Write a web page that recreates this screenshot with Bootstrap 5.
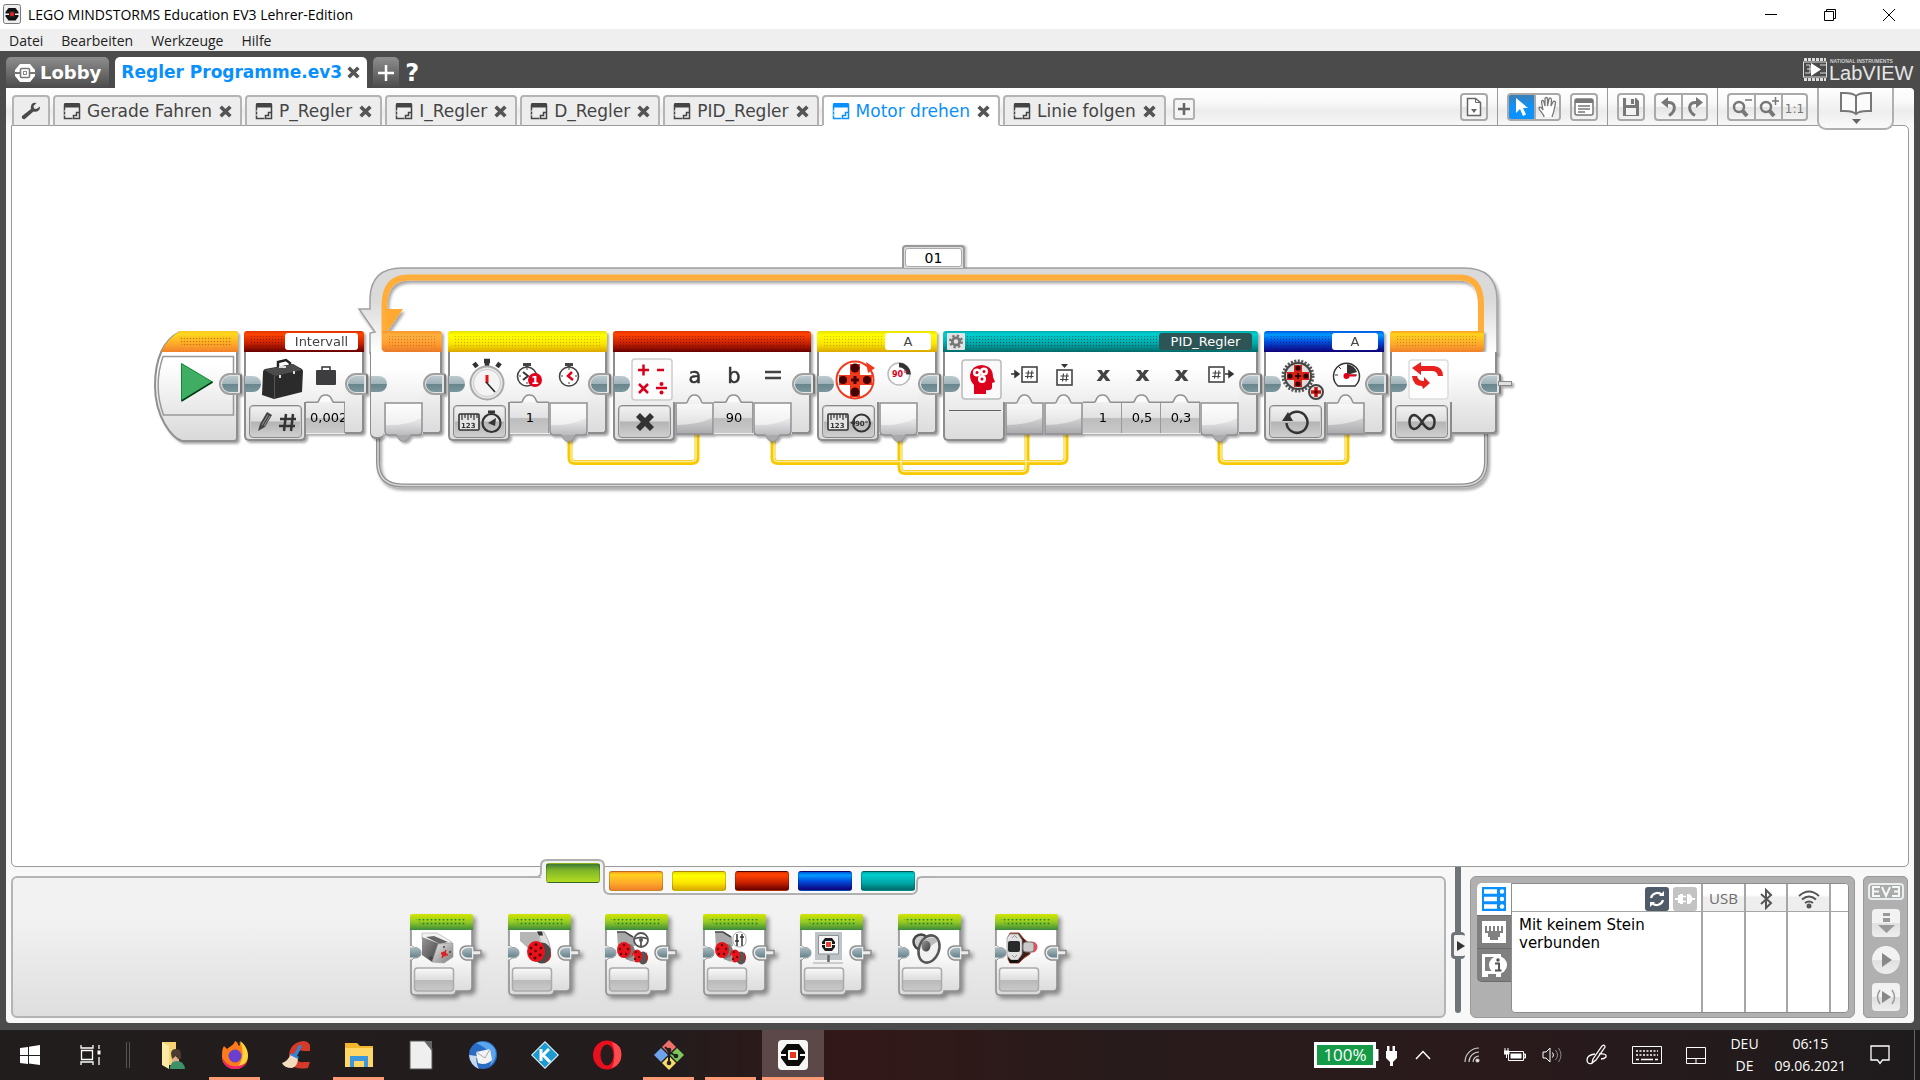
<!DOCTYPE html>
<html lang="de">
<head>
<meta charset="utf-8">
<meta name="viewport" content="width=device-width, initial-scale=1">
<title>LEGO MINDSTORMS Education EV3 Lehrer-Edition</title>
<link href="https://cdn.jsdelivr.net/npm/bootstrap@5.3.0/dist/css/bootstrap.min.css" rel="stylesheet">
<style>
:root{--ui:"DejaVu Sans",Verdana,sans-serif;--win:"Open Sans","Noto Sans",sans-serif;--line:#9a9a9a}
body{font-family:var(--ui);font-size:15px;line-height:18px;color:#333;background:#4b4b4b}
button{font-family:inherit;padding:0;border:0;background:none;color:inherit}
button svg,a svg{display:block}
.win-title{height:29px;background:#fff;color:#000;font:14px/29px var(--win)}
.win-ctl{margin-right:2px}
.win-ctl button{width:59px;height:29px;display:grid;place-items:center}
.win-menu{height:22px;background:#efefef;font:14px/24px var(--win);padding-left:9px;gap:18px}
.win-menu a{color:#222;text-decoration:none}
.proj-bar{height:37px;background:#4b4b4b;padding:6px 6px 0 6px;gap:6px}
.proj-tab{height:31px;border-radius:5px 5px 0 0;font:bold 18px/31px var(--ui);color:#fff;background:linear-gradient(#8e8e8e,#555 85%,#4b4b4b)}
.proj-tab.sel{background:#fff;color:#0a8fff;font-size:17px;padding:0 6px}
.frame-main{margin:0 6px;background:#f8f8f8;border-radius:0 4px 4px 4px}
.tab-row{height:38px;padding:0 6px;background:linear-gradient(#fff,#f8f8f8 40%,#ececec 60%,#f8f8f8);border-radius:0 5px 0 0}
.prog-tabs{gap:3px;padding-top:7px;z-index:2}
.prog-tab{height:31px;border:2px solid #b4b4b4;border-bottom:1px solid var(--line);border-radius:4px 4px 0 0;background:#ededed;font-size:17px;color:#444;padding:0 7px 0 8px;gap:6px}
.prog-tab.sel{background:#fff;border-bottom-color:#fff;color:#0a8fff}
.prog-tab.setup{padding:0 7px}
.tool-grp{height:38px;padding:5px 9px 0;gap:9px;border-left:1px solid var(--line)}
.tool-btn{width:28px;height:28px;display:grid;place-items:center;border:2px solid #a9a9a9;border-radius:4px;background:linear-gradient(#fff,#f6f6f6 50%,#e4e4e4 52%,#f4f4f4)}
.tool-join{display:flex}
.tool-join .tool-btn{width:27px}
.tool-join .tool-btn:not(:last-child){border-top-right-radius:0;border-bottom-right-radius:0;border-right-width:0}
.tool-join .tool-btn:not(:first-child){border-top-left-radius:0;border-bottom-left-radius:0}
.tool-btn.on{background:linear-gradient(#3b7fb4,#1191f5 45%,#0a92ff)}
.tool-btn.ratio{font-size:12px;color:#777}
.book-btn{width:77px;height:42px;margin-right:14px;border:2px solid #b0b0b0;border-top:0;border-radius:0 0 9px 9px;background:linear-gradient(#fff,#eee 60%,#fafafa);position:relative;z-index:3;display:grid;place-items:center}
.canvas{margin:-1px 5px 0;border:1px solid var(--line);border-radius:0 5px 5px 5px;background:#fff;padding:115px 0 0 142px;overflow:hidden}
.program{position:relative;width:1366px;height:260px;padding-top:90px}
.program>.wires{position:absolute;left:0;top:0}
.blk-row{display:flex;gap:6px;position:relative;align-items:flex-start}
.loop-name{position:absolute;left:748px;top:4px;width:63px;height:23px;border:2px solid #999;border-bottom:0;background:#ddd;border-radius:4px 4px 0 0;box-shadow:2px 0 2px #0003}
.loop-name input{display:block;width:57px;height:19px;margin:1px;padding:1px 0 0;border:1px solid #aaa;border-radius:3px;background:#fff;text-align:center;font:14px/18px var(--ui);color:#000}
.ev-block{position:relative;filter:drop-shadow(2px 2px 1px #0005)}
.ev-head{height:21px;border-radius:3px 3px 0 0;padding:2px 6px;display:flex;gap:1px}
.ev-dots{flex:1;height:12px;margin-top:2px;background:radial-gradient(circle,#0007 0 1px,transparent 1px) 0 0/3px 3px}
.hd-red{background:linear-gradient(#d30,#f40 15%,#c62000 60%,#600)}
.hd-yel{background:linear-gradient(#e8e000,#ff0 20%,#fbe600 60%,#dba800)}
.hd-teal{background:linear-gradient(#0aa,#00cfcf 15%,#00a8a8 60%,#006a6a)}
.hd-blue{background:linear-gradient(#05d,#009cff 18%,#0050e0 50%,#100078)}
.hd-org{background:linear-gradient(#f9a020,#ffd21e 15%,#ffab2a 60%,#f0812a)}
.hd-org2{background:linear-gradient(#f9982a,#fdb040 20%,#ff9c30 60%,#e87a28)}
.hd-blue .ev-dots,.hd-red .ev-dots{opacity:.8}
.hd-yel .ev-dots,.hd-org .ev-dots,.hd-org2 .ev-dots{opacity:.5}
.ev-port{width:46px;height:17px;padding:0;border:0;border-radius:3px;background:#fff;text-align:center;font:13px/17px var(--ui);color:#444}
.ev-port.wide{width:73px}
.ev-port.dark{width:93px;background:#2e5555;color:#fff}
.ev-body{display:flex;align-items:flex-start}
.ev-main{position:relative;width:62px;height:89px;border:solid #8c8c8c;border-width:0 0 2px 2px;border-radius:0 0 5px 5px;background:linear-gradient(#fff 20%,#e8e8e8 70%,#dcdcdc)}
.ev-main::after{content:"";position:absolute;right:0;top:50px;bottom:-2px;width:6px;border:solid #8c8c8c;border-width:0 2px 2px 0;border-radius:0 0 5px 0}
.ev-pic{display:block;width:44px;height:44px;margin:6px 0 3px 15px}
.mode{display:grid;place-items:center;width:53px;height:33px;margin-left:3px;border:1px solid #8a8a8a;border-radius:4px;background:linear-gradient(#f2f2f2,#ddd 48%,#b4b4b4 52%,#d0d0d0);box-shadow:inset 0 0 0 1px #ccc}
.ev-slot{width:39px;height:82px;background:linear-gradient(#fff 20%,#eee 60%);display:flex;flex-direction:column;align-items:center}
.ev-slot .ic{display:block;width:32px;height:32px;margin:7px 0 3px;flex:none}
.ev-slot .plugsvg{display:block;flex:none}
.ev-val{width:39px;height:30px;flex:none;padding:0 0 0 2px;border:solid #999;border-width:0 1px 0 0;border-radius:0;background:linear-gradient(#efefef,#e2e2e2 48%,#bdbdbd 52%,#c9c9c9);text-align:center;font:13px/30px var(--ui);color:#000}
.ev-val.cut{text-align:left;padding-left:4px}
.ev-tail{width:19px;height:82px;border:solid #8c8c8c;border-width:0 2px 2px 0;border-radius:0 0 4px 0;background:linear-gradient(#fff 20%,#e8e8e8 70%,#dcdcdc)}
.ev-in,.ev-out{position:absolute;top:45px}
.ev-in{left:1px;width:16px;height:16px;border-radius:0 8px 8px 0;background:linear-gradient(#bccace,#9fb3b9 50%,#69868d 52%,#7c979d)}
.ev-out{right:-4px;top:42px;width:23px;height:22px;border:2px solid #a0a0a0;border-right-color:#777;border-radius:11px 3px 3px 11px;background:#e4e4e4}
.ev-out::after{content:"";position:absolute;left:1px;top:1px;width:16px;height:16px;border-radius:8px 0 0 8px;background:linear-gradient(#bccace,#9fb3b9 50%,#69868d 52%,#7c979d)}
.ev-out.stub::before{content:"";position:absolute;left:18px;top:6px;width:14px;height:5px;background:#e0e0e0;border:1px solid #888}
.lp-head{margin-left:12px;border-radius:0 3px 0 4px}
.lp-edge{width:14px;height:87px;border:solid #8c8c8c;border-width:0 0 2px 1px;border-radius:0 0 6px 6px;background:linear-gradient(#fff 20%,#dcdcdc)}
.lp-end{width:107px}
.lp-end .ev-head{width:94px;border-radius:3px 0 4px 0}
.lp-end .ev-tail{width:45px}
.dock{height:156px;padding:0 6px 5px 5px}
.palette{position:relative;height:142px;margin-top:9px;border:2px solid #b4b4b4;border-radius:6px;background:linear-gradient(#f2f2f2 30%,#dedede)}
.pal-tabs{position:absolute;left:521px;top:-20px}
.pal-btns{position:absolute;left:533px;top:-15px;display:flex;gap:9px}
.pal-btns button{width:54px;height:20px;border-radius:3px;border:1px solid #0003;margin-top:8px}
.pal-btns button:first-child{margin-top:0}
.pc-g{background:linear-gradient(#3d7a35,#7fb52a 35%,#b2dd20)}
.pal-items{width:648px;margin:36px 0 0 397px;display:flex;justify-content:space-between}
.pal-blk{position:relative;width:63px;height:81px;filter:drop-shadow(3px 3px 2px #0006)}
.pal-blk .pic{position:absolute;left:0;top:0}
.split{width:14px;margin:0 5px 5px;position:relative;display:flex;justify-content:center}
.split i{width:6px;background:#6e7478;border-radius:0 0 3px 3px}
.split button{position:absolute;top:65px;left:0;width:14px;height:27px;border-radius:4px;background:#f4f4f4;border:3px solid #6e7478;border-right:0}
.brick{width:385px;height:142px;margin-top:9px;padding:6px 5px 4px 6px;background:#b0b0b0;border:1px solid #999;border-radius:6px}
.brick-tabs button{width:34px;height:33px;display:grid;place-items:center;background:#808080;border-bottom:1px solid #6c6c6c}
.brick-tabs button:first-child{background:#fff;border-radius:5px 0 0 0}
.brick-tabs button:last-child{border-radius:0 0 0 5px}
.brick-list{background:#fff;border-radius:0 4px 4px 4px;border:1px solid #8d8d8d;table-layout:fixed;border-collapse:separate;border-spacing:0;overflow:hidden;flex:1;height:130px;width:338px}
.brick-list th,.brick-list td{padding:0;border-right:2px solid #a6a6a6;vertical-align:top;font-weight:400}
.brick-list th{height:28px;border-bottom:1px solid #a6a6a6;color:#6c6c6c;text-align:center;vertical-align:middle;font:15px/26px var(--win);background:linear-gradient(#fff 40%,#eee 50%,#eee)}
.brick-list th:first-child,.brick-list th:last-child{background:#fff}
.brick-list th:last-child,.brick-list td:last-child{border-right:0}
.brick-list td:first-child{padding:4px 0 0 7px;color:#000}
.mini{width:24px;height:24px;border-radius:3px;display:inline-grid;place-items:center;background:#4f5b68;vertical-align:middle}
.mini.off{background:#c3c3c3}
.runbox{width:45px;height:142px;margin:9px 0 0 8px;background:#b0b0b0;border:1px solid #999;border-radius:5px;padding-top:6px;gap:9px}
.runbox button{width:28px;height:28px;display:grid;place-items:center;background:linear-gradient(#f2f2f2 50%,#e0e0e0 52%,#eee);border-radius:4px}
.taskbar{height:50px;margin-top:7px;background:linear-gradient(90deg,#221d1d,#231c1c 35%,#331818 44%,#281b1b 58%,#2a1a1c 78%,#1e1b1c);color:#fff;font:14px/22px var(--win)}
.task{width:62px;height:50px;position:relative;display:grid;place-items:center;flex:none}
.task.start{width:60px}
.task-sep{margin-right:12px;flex:none}
.task.run::after{content:"";position:absolute;bottom:0;left:5px;right:6px;height:3px;background:#ff9a76}
.task.act{background:#5c4848}
.task.act::after{left:0;right:0}
.tray button{height:50px;display:grid;place-items:center;flex:none}
.tray .tray-more{width:34px}
</style>
</head>
<body>
<svg width="0" height="0" class="position-absolute" aria-hidden="true">
<defs>
<pattern id="dots" width="3" height="3" patternUnits="userSpaceOnUse"><circle cx="1.5" cy="1.5" r=".8" fill="#b06000" opacity=".7"/></pattern>
<pattern id="dotsG" width="4" height="4" patternUnits="userSpaceOnUse"><circle cx="1.5" cy="1.5" r="1" fill="#1f8a20"/></pattern>
<linearGradient id="gOrg" x2="0" y2="1"><stop offset="0" stop-color="#ffc81e"/><stop offset=".15" stop-color="#ffd81c"/><stop offset=".6" stop-color="#ffab2a"/><stop offset="1" stop-color="#f0812a"/></linearGradient>
<linearGradient id="gBody" x2="0" y2="1"><stop offset=".3" stop-color="#fff"/><stop offset="1" stop-color="#d9d9d9"/></linearGradient>
<linearGradient id="gPlug" x2="0" y2="1"><stop offset="0" stop-color="#fbfbfb"/><stop offset=".5" stop-color="#e2e2e4"/><stop offset="1" stop-color="#a9a9ad"/></linearGradient>
<linearGradient id="gIn" x2="0" y2="1"><stop offset="0" stop-color="#fff"/><stop offset=".5" stop-color="#dcdcdc"/><stop offset="1" stop-color="#a9a9ad"/></linearGradient>
<linearGradient id="gGreen" x2="0" y2="1"><stop offset="0" stop-color="#d4e600"/><stop offset=".5" stop-color="#94c924"/><stop offset="1" stop-color="#3d8a3c"/></linearGradient>
<linearGradient id="gBtn" x2="0" y2="1"><stop offset="0" stop-color="#fafafa"/><stop offset=".5" stop-color="#dedede"/><stop offset=".54" stop-color="#bababa"/><stop offset="1" stop-color="#cacaca"/></linearGradient>
<linearGradient id="gConn" x2="0" y2="1"><stop offset="0" stop-color="#a9bbc0"/><stop offset="1" stop-color="#66828a"/></linearGradient>
<linearGradient id="gMetal" x2="1" y2="1"><stop offset="0" stop-color="#eee"/><stop offset="1" stop-color="#777"/></linearGradient>
<linearGradient id="gDark" x2="1" y2="1"><stop offset="0" stop-color="#999"/><stop offset="1" stop-color="#3c3c3c"/></linearGradient>
<symbol id="x" viewBox="0 0 14 14"><path d="M2.500 2.500 11.500 11.500M11.500 2.500 2.500 11.500" stroke="#555" stroke-width="3.400"/></symbol>
<symbol id="prog" viewBox="0 0 18 18"><path d="M1.500 2.500v14h8M16.500 2.500V10" fill="none" stroke="currentColor" stroke-width="1.500"/><path d="M1 2q0-1 1-1H16q1 0 1 1V5.500H1z" fill="currentColor"/><path d="M10.500 13.500h3v-3h3v6h-6z" fill="none" stroke="currentColor" stroke-width="1.500"/><path d="M1 9h2M1 13h2" stroke="#eee" stroke-width="1"/></symbol>
<symbol id="pOut" viewBox="0 0 39 48"><path d="M1 9H38V37q0 4-4 4H27c-2 0-2 6-7.500 6S14 41 12 41H5q-4 0-4-4z" fill="url(#gPlug)" stroke="#909094" stroke-width="1.500"/><path d="M2 10H37V24Q22 32 2 31z" fill="#fff" opacity=".55"/><path d="M12 41H27c-2 0-2 6-7.500 6S14 41 12 41z" fill="#aaa"/></symbol>
<symbol id="pIn" viewBox="0 0 39 48"><path d="M1 9H11C14 9 12 1 19.500 1S25 9 28 9H38V40H1z" fill="url(#gIn)" stroke="#909094" stroke-width="1.500"/><path d="M2 10H37V24Q22 31 2 31z" fill="#fff" opacity=".5"/></symbol>
<symbol id="bump" viewBox="0 0 39 9"><path d="M0 8.300H11C14 8.300 12 1 19.500 1S25 8.300 28 8.300H39" fill="#fafafa" stroke="#909094" stroke-width="1.500"/></symbol>
<symbol id="clk" viewBox="0 0 32 32"><path d="M12 5.500h8M16 5v4" stroke="#444" stroke-width="3"/><circle cx="16" cy="17.500" r="9.500" fill="#fff" stroke="#444" stroke-width="1.600"/><path d="M16 9v2M8 17h2M22 17h2M16 23v2" stroke="#444"/></symbol>
<symbol id="hash" viewBox="0 0 32 32"><rect x="9" y="8" width="15" height="15" fill="#fff" stroke="#444" stroke-width="1.600"/><path d="M15.500 11.500l-1 8M19 11.500l-1 8M12.500 14h8.500M12 17.500h8.500" stroke="#444" stroke-width="1.200"/></symbol>
<symbol id="cross" viewBox="0 0 32 32"><path d="M10 11h4.500l2 3 2-3H23l-4 5 4.500 6H19l-2.500-3.500L14 22H9.500l4.500-6z" fill="#444"/></symbol>
<symbol id="ruler" viewBox="0 0 22 18"><rect x="1" y="1" width="20" height="16" rx="1" fill="#e4e4e4" stroke="#333" stroke-width="1.600"/><path d="M4 1v6M7 1v4M10 1v6M13 1v4M16 1v6M19 1v4" stroke="#333" stroke-width="1.200"/></symbol>
<symbol id="palbase" viewBox="0 0 76 82"><path d="M1 15H62V73q0 4-4 4H46v1q-1 3-4 3H5q-4 0-4-4z" fill="url(#gBody)" stroke="#909090" stroke-width="1.600"/><path d="M0 2q0-2 2-2H61q2 0 2 2V16H0z" fill="url(#gGreen)"/><path d="M6 5H56V12H10V9H6z" fill="url(#dotsG)"/><rect x="4.500" y="54" width="39" height="23" rx="3" fill="url(#gBtn)" stroke="#aaa" stroke-width="1.500"/><path d="M-1 31.500h3l2 2h2q5 1 5 5.500T6 44H4l-2 2h-3z" fill="#ececec" stroke="#999"/><path d="M0 33.500h6q5 1 5 5T6 43.500H0z" fill="url(#gConn)"/><path d="M64 32H56q-6 1-6 6.500T56 46h8V41h7v-4.500h-7z" fill="#ececec" stroke="#909090" stroke-width="1.500"/><path d="M62 34h-5q-5 1-5 4.500t5 5h5z" fill="url(#gConn)"/></symbol>
<symbol id="motorL" viewBox="0 0 34 34"><path d="M2 2h18l2 10-10 8L2 11z" fill="#b5b5b5"/><path d="M20 2h6q5 8 7 18l-6 6z" fill="#dedede" stroke="#999" stroke-width=".7"/><path d="M19 1.500h5l1 4h-4z" fill="#333"/><ellipse cx="24" cy="23" rx="9" ry="10.500" fill="#4a4a4a"/><path d="M31 16q3 6 0 12l-4 5q7-3 6-10t-2-7z" fill="#d8141a"/><ellipse cx="18" cy="21.500" rx="9" ry="10.500" fill="#e8131a"/><g fill="#5a0000"><circle cx="18" cy="14.500" r="1.500"/><circle cx="13" cy="18" r="1.500"/><circle cx="12.500" cy="24" r="1.500"/><circle cx="17" cy="28" r="1.500"/><circle cx="22" cy="25" r="1.500"/><circle cx="23" cy="18" r="1.500"/><circle cx="17.500" cy="21" r="1.300"/></g></symbol>
<symbol id="motor2" viewBox="0 0 34 34"><path d="M2 1h9l8 5 1 9-17 2z" fill="#a8a8a8"/><path d="M2 1h8l8 5" stroke="#444" stroke-width="1.500" fill="none"/><ellipse cx="28" cy="27" rx="5" ry="6.500" fill="#555"/><path d="M31 21q3 5 0 11z" fill="#d8141a"/><ellipse cx="14" cy="21" rx="6" ry="8" fill="#777"/><ellipse cx="9" cy="19" rx="7" ry="8" fill="#e8131a"/><ellipse cx="22" cy="25" rx="5" ry="6.500" fill="#e8131a"/><path d="M12 27q4 1 7-4l1 7q-5 2-8-3z" fill="#999"/><g fill="#5a0000"><circle cx="9" cy="14" r="1.200"/><circle cx="5" cy="18" r="1.200"/><circle cx="13" cy="18" r="1.200"/><circle cx="6" cy="23" r="1.200"/><circle cx="11" cy="23" r="1.200"/><circle cx="21" cy="21" r="1.100"/><circle cx="24" cy="26" r="1.100"/><circle cx="20" cy="28" r="1.100"/></g></symbol>
</defs></svg>

<div class="d-flex flex-column min-vh-100">
<header>
 <div class="win-title d-flex">
  <svg class="mt-1 me-1" width="24" height="20" viewBox="-3 0 24 20"><rect x=".5" y=".5" width="17" height="19" rx="2" fill="#eee" stroke="#777"/><path d="M5.500 4h7l3 4v1.500h-13V8zM2.500 11h13v1.500l-3 4h-7l-3-4z" fill="#111"/><rect x="6" y="7" width="6" height="6.500" fill="#222"/><rect x="7.200" y="8.300" width="3.600" height="3.600" fill="#e22"/></svg>
  <span>LEGO MINDSTORMS Education EV3 Lehrer-Edition</span>
  <div class="win-ctl d-flex ms-auto">
   <button aria-label="Minimieren"><svg width="12" height="12"><path d="M0 5.500h12" stroke="#000"/></svg></button>
   <button aria-label="Verkleinern"><svg width="14" height="14" fill="none" stroke="#000"><path d="M1.500 3.500h9v9h-9zM3.500 3V1.500h9v9H11"/></svg></button>
   <button aria-label="Schließen"><svg width="12" height="12"><path d="M0 0 12 12M12 0 0 12" stroke="#000"/></svg></button>
  </div>
 </div>
 <nav class="win-menu d-flex"><a href="#">Datei</a><a href="#">Bearbeiten</a><a href="#">Werkzeuge</a><a href="#">Hilfe</a></nav>
 <div class="proj-bar d-flex">
  <button class="proj-tab d-flex align-items-center px-2 gap-1"><svg width="22" height="20" viewBox="0 0 22 20"><path d="M6 1h10l5 6v6l-5 6H6l-5-6V7z" fill="#fff"/><path d="M0 10h6M16 10h6" stroke="#777" stroke-width="2"/><rect x="6.500" y="5.500" width="9" height="9" rx="1" fill="#fff" stroke="#777" stroke-width="1.600"/><rect x="9.500" y="8.500" width="3" height="3" fill="none" stroke="#888"/></svg>Lobby</button>
  <div class="proj-tab sel d-flex align-items-center"><span class="me-1">Regler Programme.ev3</span><button aria-label="Projekt schließen"><svg width="15" height="15"><use href="#x"/></svg></button></div>
  <button class="proj-tab px-1" aria-label="Neues Projekt"><svg width="18" height="18" viewBox="0 0 18 18"><path d="M9 1v16M1 9h16" stroke="#fff" stroke-width="2.500"/></svg></button>
  <button class="text-white fw-bold fs-4 lh-1" aria-label="Hilfe">?</button>
  <svg class="ms-auto" width="112" height="26" viewBox="0 0 112 26" role="img" aria-label="LabVIEW"><g stroke="#ddd" fill="none"><path d="M2 2.500h22M2 22.500h22" stroke-width="3" stroke-dasharray="3 1"/><path d="M1 5h24M1 20h24M1.500 5v15M24.500 5v15M4 8h4v8H3M18 8h6M18 16h6M5 12h4"/></g><path d="M9 6v13l10-6.500z" fill="#fff"/><text x="28" y="5.500" font-family="Liberation Sans" font-weight="bold" font-size="5" fill="#ccc">NATIONAL INSTRUMENTS</text><text x="27" y="23" font-family="Liberation Sans" font-size="20" fill="#e6e6e6">LabVIEW</text></svg>
 </div>
</header>

<main class="frame-main flex-grow-1 d-flex flex-column">
 <div class="tab-row d-flex">
  <div class="prog-tabs d-flex position-relative">
   <button class="prog-tab setup d-flex align-items-center" aria-label="Projekteigenschaften"><svg width="20" height="18" viewBox="0 0 20 18"><path d="M19 4.500 15.500 7 13 6.500 12.500 4 15.500 1Q11 0 10 4q-.5 2 0 3L1 14q-1 3 2.500 3.200L12.500 9.500q4 1 6-2 .6-2 .5-3z" fill="#4a4a4a"/></svg></button>
   <div class="prog-tab d-flex align-items-center"><svg width="18" height="18"><use href="#prog"/></svg><span>Gerade Fahren</span><button aria-label="Schließen"><svg width="15" height="15"><use href="#x"/></svg></button></div>
   <div class="prog-tab d-flex align-items-center"><svg width="18" height="18"><use href="#prog"/></svg><span>P_Regler</span><button aria-label="Schließen"><svg width="15" height="15"><use href="#x"/></svg></button></div>
   <div class="prog-tab d-flex align-items-center"><svg width="18" height="18"><use href="#prog"/></svg><span>I_Regler</span><button aria-label="Schließen"><svg width="15" height="15"><use href="#x"/></svg></button></div>
   <div class="prog-tab d-flex align-items-center"><svg width="18" height="18"><use href="#prog"/></svg><span>D_Regler</span><button aria-label="Schließen"><svg width="15" height="15"><use href="#x"/></svg></button></div>
   <div class="prog-tab d-flex align-items-center"><svg width="18" height="18"><use href="#prog"/></svg><span>PID_Regler</span><button aria-label="Schließen"><svg width="15" height="15"><use href="#x"/></svg></button></div>
   <div class="prog-tab sel d-flex align-items-center"><svg width="18" height="18"><use href="#prog"/></svg><span>Motor drehen</span><button aria-label="Schließen"><svg width="15" height="15"><use href="#x"/></svg></button></div>
   <div class="prog-tab d-flex align-items-center"><svg width="18" height="18"><use href="#prog"/></svg><span>Linie folgen</span><button aria-label="Schließen"><svg width="15" height="15"><use href="#x"/></svg></button></div>
   <button class="ms-1 mb-1" aria-label="Neues Programm"><svg width="22" height="22" viewBox="0 0 22 22"><rect x="1" y="1" width="20" height="20" rx="2" fill="#f4f4f4" stroke="#b0b0b0" stroke-width="2"/><path d="M11 5v12M5 11h12" stroke="#666" stroke-width="2.500"/></svg></button>
  </div>
  <div class="ms-auto d-flex">
   <div class="tool-grp d-flex border-0"><button class="tool-btn" aria-label="Seite"><svg width="16" height="20" viewBox="0 0 16 20"><path d="M1.500 1.500h8l5 4v13h-13z" fill="#fff" stroke="#666" stroke-width="1.500"/><path d="M9.500 1.500v4h5" fill="none" stroke="#666"/><path d="M5 12h6l-3 4z" fill="#666"/></svg></button></div>
   <div class="tool-grp d-flex">
    <div class="tool-join"><button class="tool-btn on" aria-label="Auswählen"><svg width="14" height="20" viewBox="0 0 14 20"><path d="M1 1v15l4-4 3 7 3-1.500-3-6.500h5z" fill="#fff"/></svg></button><button class="tool-btn" aria-label="Schwenken"><svg width="20" height="22" viewBox="0 0 20 22"><path d="M6 21c0-4-5-6-5-9 1-2 3 0 4 2L3.500 6c0-2 2-2 2.500 0L7 10V3c0-2 2.500-2 2.500 0v7L11 3c.5-2 2.500-1 2.500 1L13 10l2-4c1-1.500 3-.5 2.500 1-1 5-1.500 9-3.500 14" fill="#fff" stroke="#777" stroke-width="1.300"/></svg></button></div>
    <button class="tool-btn" aria-label="Kommentar"><svg width="20" height="18" viewBox="0 0 20 18"><rect x="1" y="1" width="18" height="16" rx="2" fill="#fff" stroke="#777" stroke-width="1.500"/><path d="M1 3h18" stroke="#777" stroke-width="4"/><path d="M4 8h12M4 11h12M4 14h7" stroke="#777" stroke-width="1.400"/></svg></button>
   </div>
   <div class="tool-grp d-flex">
    <button class="tool-btn" aria-label="Speichern"><svg width="18" height="20" viewBox="0 0 18 20"><path d="M1 1h13l3 3v15H1z" fill="#777"/><path d="M4 1h9v7H4z" fill="#f4f4f4"/><path d="M9 2h3v5H9z" fill="#777"/><path d="M4 11h10v7H4z" fill="#f4f4f4"/></svg></button>
    <div class="tool-join"><button class="tool-btn" aria-label="Rückgängig"><svg width="18" height="20" viewBox="0 0 18 20"><path d="M8 0v11L1 5.500z" fill="#777"/><path d="M7 5.500c10-1 9 9 2 13" fill="none" stroke="#777" stroke-width="3"/></svg></button><button class="tool-btn" aria-label="Wiederholen"><svg width="18" height="20" viewBox="0 0 18 20"><path d="M10 0v11l7-5.500z" fill="#777"/><path d="M11 5.500c-10-1-9 9-2 13" fill="none" stroke="#777" stroke-width="3"/></svg></button></div>
   </div>
   <div class="tool-grp d-flex">
    <div class="tool-join"><button class="tool-btn" aria-label="Verkleinern"><svg width="22" height="22" viewBox="0 0 22 22"><circle cx="8" cy="11" r="5" fill="none" stroke="#777" stroke-width="2.500"/><path d="M11 14l5 6" stroke="#777" stroke-width="4"/><path d="M14 4h7" stroke="#777" stroke-width="1.500"/></svg></button><button class="tool-btn" aria-label="Vergrößern"><svg width="22" height="22" viewBox="0 0 22 22"><circle cx="8" cy="11" r="5" fill="none" stroke="#777" stroke-width="2.500"/><path d="M11 14l5 6" stroke="#777" stroke-width="4"/><path d="M14 5h7M17.500 1v8" stroke="#777" stroke-width="1.500"/></svg></button><button class="tool-btn ratio">1:1</button></div>
   </div>
   <button class="book-btn" aria-label="Inhaltseditor"><svg width="34" height="34" viewBox="0 0 34 34"><path d="M17 5C13 1 7 2 2 2v18c5 0 11-1 15 3 4-4 10-3 15-3V2C27 2 21 1 17 5zV22" fill="#fbfbfb" stroke="#777" stroke-width="2"/><path d="M13 28h9l-4.500 5z" fill="#666"/></svg></button>
  </div>
 </div>

 <section class="canvas flex-grow-1">
  <div class="program">
   <svg class="wires" width="1366" height="260" viewBox="154 241 1366 260" fill="none">
    <defs><linearGradient id="gBand" gradientUnits="userSpaceOnUse" x1="0" y1="300" x2="0" y2="352"><stop offset="0" stop-color="#dadada"/><stop offset="1" stop-color="#fff"/></linearGradient><filter id="sh" x="-5%" y="-20%" width="110%" height="150%"><feDropShadow dx="2" dy="3" stdDeviation="1.500" flood-opacity=".35"/></filter></defs>
    <g filter="url(#sh)">
     <path d="M378 436V462Q378 485 402 485.500H1462Q1486 485 1486 462V432" stroke="#8f8f8f" stroke-width="4"/><path d="M378 436V462Q378 485 402 485.500H1462Q1486 485 1486 462V432" stroke="#d6d6d6" stroke-width="1.500"/>
     <path d="M370 352V332H375L359 309H370V298Q371 268 402 268H1464Q1496 268 1497 298V352H1478V305Q1478 280 1458 280H408Q387 280 386 305V352z" fill="url(#gBand)"/><path d="M370 354V333L375 332 359 309H370V298Q371 268 402 268H1464Q1496 268 1497 298V354" stroke="#a0a0a0" stroke-width="1.500"/>
     <path d="M384.500 350V304Q385 278 408 277.500H1460Q1481 278 1481 304V350" stroke="#ffae3b" stroke-width="6"/><path d="M385 309H403L387 332z" fill="#ffa932"/>
    </g>
    <g stroke="#f9c900" stroke-width="5"><path d="M570 436V458Q570 462.500 575 462.500H692Q697 462.500 697 458V432"/><path d="M773 436V458Q773 462.500 778 462.500H1061Q1066 462.500 1066 458V432"/><path d="M900 436V467Q900 472.500 905 472.500H1022Q1027 472.500 1027 467V432"/><path d="M1220 436V458Q1220 462.500 1225 462.500H1342Q1347 462.500 1347 458V432"/></g>
    <g stroke="#fcec9c" stroke-width="1.600"><path d="M571 436V458Q571 461.500 575 461.500H692Q696 461.500 696 458V432"/><path d="M774 436V458Q774 461.500 778 461.500H1061Q1065 461.500 1065 458V432"/><path d="M901 436V467Q901 471.500 905 471.500H1022Q1026 471.500 1026 467V432"/><path d="M1221 436V458Q1221 461.500 1225 461.500H1342Q1346 461.500 1346 458V432"/></g>
   </svg>
   <div class="loop-name"><input aria-label="Schleifenname" value="01"></div>
   <div class="blk-row">
    <div class="ev-block"><svg class="d-block" width="84" height="111" viewBox="154 330 84 111"><path d="M180 331H235q2 0 2 2V437q0 3-3 3H182C172 437 155 416 155 385S166 338 180 331z" fill="url(#gBody)" stroke="#909090" stroke-width="2"/><path d="M180 330H235q3 0 3 3V351H161Q167 338 180 330z" fill="url(#gOrg)"/><path d="M178 335H232V345H182z" fill="url(#dots)"/><path d="M163 355.500H233.500V414H163.500Q153 385 163 355.500z" fill="none" stroke="#999" stroke-width="1.500"/><path d="M181.500 362.500V400L212.500 381z" fill="#3fae63" stroke="#0c8a3a"/><path d="M181.500 400 212.500 381" stroke="#053d18" stroke-width="1.500"/></svg><span class="ev-out"></span></div>

    <div class="ev-block"><div class="ev-head hd-red"><span class="ev-dots"></span><input class="ev-port wide" aria-label="Variable" value="Intervall"></div>
     <div class="ev-body"><div class="ev-main"><svg class="ev-pic" viewBox="0 0 44 44"><path d="M17 9V4l8-2 4 3v5" fill="none" stroke="#222" stroke-width="2.500"/><path d="M2 14Q2 12 4 11L32 6l9 5 1 2-1 21-28 7L1 37z" fill="#2b2b2b"/><path d="M3 12 32 6l9 6-27 6z" fill="#4c4c4c"/><path d="M13.500 18v22" stroke="#555"/><path d="M18 9h7M19 17v3M33 13v3" stroke="#ddd" stroke-width="2"/></svg>
      <button class="mode" aria-label="Schreiben numerisch"><svg width="40" height="22" viewBox="0 0 40 22"><path d="M2 20 4 13 11 1l5 3-7 12z" fill="#444"/><path d="M6 14 12 4M8 15l6-10" stroke="#aaa" stroke-width=".8"/><path d="M30 3l-2 17M37 3l-2 17M24 8h16M23 15h16" stroke="#333" stroke-width="2.500"/></svg></button></div>
      <div class="ev-slot"><svg class="ic" viewBox="0 0 32 32"><path d="M12 12V8h8v4" fill="none" stroke="#333" stroke-width="1.500"/><rect x="6" y="11" width="20" height="15" rx="1" fill="#3d3d3f"/></svg><svg class="plugsvg" width="39" height="9"><use href="#bump"/></svg><input class="ev-val cut" aria-label="Wert" value="0,002"></div><div class="ev-tail"></div></div><span class="ev-in"></span><span class="ev-out"></span></div>

    <div class="ev-block"><div class="ev-head hd-org2 lp-head"><span class="ev-dots"></span></div>
     <div class="ev-body"><div class="lp-edge"></div><div class="ev-slot"><span class="ic"></span><svg class="plugsvg" width="39" height="48"><use href="#pOut"/></svg></div><div class="ev-tail"></div></div><span class="ev-in"></span><span class="ev-out"></span></div>

    <div class="ev-block"><div class="ev-head hd-yel"><span class="ev-dots"></span></div>
     <div class="ev-body"><div class="ev-main"><svg class="ev-pic" viewBox="0 0 44 44"><path d="M19 3h6M22 3v5M9 5l3 4M35 5l-3 4" stroke="#333" stroke-width="4.500"/><circle cx="22" cy="25" r="16.500" fill="#e8e8e8" stroke="#aaa" stroke-width="2"/><circle cx="22" cy="25" r="13.500" fill="#f4f4f4" stroke="#ccc"/><path d="M22 17v8" stroke="#e11" stroke-width="3"/><path d="M21 24l9 10" stroke="#222" stroke-width="1.500"/></svg>
      <button class="mode" aria-label="Messen Zeit"><svg width="44" height="24" viewBox="0 0 44 24"><svg y="3" width="22" height="18"><use href="#ruler"/></svg><text x="3" y="18" font-size="7" font-weight="bold" fill="#333">123</text><path d="M30 2h7" stroke="#333" stroke-width="3"/><circle cx="33.500" cy="13" r="9" fill="none" stroke="#333" stroke-width="2.200"/><path d="M38 8 30 13l7 3z" fill="#333"/></svg></button></div>
      <div class="ev-slot"><svg class="ic" viewBox="0 0 32 32"><use href="#clk" x="-3"/><path d="M9 13l5 4-5 4" fill="none" stroke="#333" stroke-width="2"/><circle cx="21" cy="21" r="7" fill="#e2001a"/><text x="21" y="25" text-anchor="middle" font-size="11" font-weight="bold" fill="#fff">1</text></svg><svg class="plugsvg" width="39" height="9"><use href="#bump"/></svg><input class="ev-val" aria-label="Timer-Kennung" value="1"></div>
      <div class="ev-slot"><svg class="ic" viewBox="0 0 32 32"><use href="#clk"/><path d="M19 13l-4 4 5 4" fill="none" stroke="#e2001a" stroke-width="2.500"/></svg><svg class="plugsvg" width="39" height="48"><use href="#pOut"/></svg></div><div class="ev-tail"></div></div><span class="ev-in"></span><span class="ev-out"></span></div>

    <div class="ev-block"><div class="ev-head hd-red"><span class="ev-dots"></span></div>
     <div class="ev-body"><div class="ev-main"><svg class="ev-pic" viewBox="0 0 44 44"><rect x="2" y="1" width="40" height="41" rx="3" fill="#fcfcfc" stroke="#ccc" stroke-width="1.500"/><path d="M8 12h11M13.500 6.500v11M27 12h7M9 26l9 9M18 26l-9 9M26 30h11" stroke="#d9001b" stroke-width="2.500"/><circle cx="31.500" cy="26" r="2" fill="#d9001b"/><circle cx="31.500" cy="34.500" r="2" fill="#d9001b"/></svg>
      <button class="mode" aria-label="Multiplizieren"><svg width="20" height="20" viewBox="0 0 20 20"><path d="M5 1l5 5 5-5 4 4-5 5 5 5-4 4-5-5-5 5-4-4 5-5-5-5z" fill="#333"/></svg></button></div>
      <div class="ev-slot"><svg class="ic" viewBox="0 0 32 32"><text x="16" y="24" text-anchor="middle" font-size="21" fill="#333" stroke="#333" stroke-width=".5">a</text></svg><svg class="plugsvg" width="39" height="48"><use href="#pIn"/></svg></div>
      <div class="ev-slot"><svg class="ic" viewBox="0 0 32 32"><text x="16" y="24" text-anchor="middle" font-size="21" fill="#333" stroke="#333" stroke-width=".5">b</text></svg><svg class="plugsvg" width="39" height="9"><use href="#bump"/></svg><input class="ev-val" aria-label="b" value="90"></div>
      <div class="ev-slot"><svg class="ic" viewBox="0 0 32 32"><path d="M8 13h16M8 19h16" stroke="#444" stroke-width="2.500"/></svg><svg class="plugsvg" width="39" height="48"><use href="#pOut"/></svg></div><div class="ev-tail"></div></div><span class="ev-in"></span><span class="ev-out"></span></div>

    <div class="ev-block"><div class="ev-head hd-yel"><span class="ev-dots"></span><input class="ev-port" aria-label="Anschluss Motorumdrehung" value="A"></div>
     <div class="ev-body"><div class="ev-main"><svg class="ev-pic" viewBox="0 0 44 44"><circle cx="21" cy="22" r="18.500" fill="#fff" stroke="#f03a1e" stroke-width="2"/><path d="M16 6h10v11h12v10H26v12H16V27H5V17h11z" fill="#f03a1e"/><g fill="#400"><circle cx="21" cy="10" r="4.500"/><circle cx="21" cy="34" r="4.500"/><circle cx="9" cy="22" r="4"/><circle cx="33" cy="22" r="4"/></g><path d="M17 22h8M21 18v8" stroke="#400" stroke-width="3"/><path d="M32 4l9 6-7 5z" fill="#f03a1e"/></svg>
      <button class="mode" aria-label="Messen Grad"><svg width="44" height="24" viewBox="0 0 44 24"><svg y="3" width="22" height="18"><use href="#ruler"/></svg><text x="3" y="18" font-size="7" font-weight="bold" fill="#333">123</text><circle cx="34.500" cy="13" r="8.500" fill="none" stroke="#333" stroke-width="2"/><text x="28" y="16" font-size="7" font-weight="bold" fill="#333">90°</text><path d="M23 13l5-4v6z" fill="#333"/></svg></button></div>
      <div class="ev-slot"><svg class="ic" viewBox="0 0 32 32"><circle cx="16" cy="15" r="11" fill="#fff" stroke="#bbb" stroke-width="1.500"/><path d="M16 6a9.500 9.500 0 0 1 9.500 9.500" fill="none" stroke="#333" stroke-width="4.500"/><text x="9" y="18" font-size="8" font-weight="bold" fill="#d9001b">90°</text></svg><svg class="plugsvg" width="39" height="48"><use href="#pOut"/></svg></div><div class="ev-tail"></div></div><span class="ev-in"></span><span class="ev-out"></span></div>

    <div class="ev-block"><div class="ev-head hd-teal ps-1"><svg width="18" height="17" viewBox="0 0 18 17"><rect width="18" height="17" rx="1" fill="#e3e3e3"/><circle cx="9" cy="8.500" r="5.500" fill="none" stroke="#777" stroke-width="3" stroke-dasharray="2.200 2.120"/><circle cx="9" cy="8.500" r="3.700" fill="none" stroke="#777" stroke-width="2.800"/></svg><span class="ev-dots"></span><input class="ev-port dark" aria-label="Eigener Block" value="PID_Regler"></div>
     <div class="ev-body"><div class="ev-main"><svg class="ev-pic" viewBox="0 0 44 44"><rect x="2" y="2" width="39" height="39" rx="3" fill="#fafafa" stroke="#bbb" stroke-width="1.500"/><path d="M14 36V27q-4-4-4-10Q12 7 22 7q11 1 11 12l2 5-3 1v5q-1 3-6 2v4z" fill="#dd001c"/><g fill="none" stroke="#fff" stroke-width="2.500"><circle cx="17" cy="14.500" r="2.800"/><circle cx="24" cy="13.500" r="2.800"/><circle cx="22" cy="21" r="2.800"/></g></svg><hr class="mx-1 my-0 mt-2 opacity-75"></div>
      <div class="ev-slot"><svg class="ic" viewBox="0 0 32 32"><use href="#hash" x="4"/><path d="M2 15h6M6 12l4 3-4 3z" stroke="#333" stroke-width="1.500" fill="#333"/></svg><svg class="plugsvg" width="39" height="48"><use href="#pIn"/></svg></div>
      <div class="ev-slot"><svg class="ic" viewBox="0 0 32 32"><use href="#hash" y="3"/><path d="M13 5h7l-3.500 4z" fill="#333"/></svg><svg class="plugsvg" width="39" height="48"><use href="#pIn"/></svg></div>
      <div class="ev-slot"><svg class="ic"><use href="#cross"/></svg><svg class="plugsvg" width="39" height="9"><use href="#bump"/></svg><input class="ev-val" aria-label="P" value="1"></div>
      <div class="ev-slot"><svg class="ic"><use href="#cross"/></svg><svg class="plugsvg" width="39" height="9"><use href="#bump"/></svg><input class="ev-val" aria-label="I" value="0,5"></div>
      <div class="ev-slot"><svg class="ic"><use href="#cross"/></svg><svg class="plugsvg" width="39" height="9"><use href="#bump"/></svg><input class="ev-val" aria-label="D" value="0,3"></div>
      <div class="ev-slot"><svg class="ic" viewBox="0 0 32 32"><use href="#hash" x="-4"/><path d="M21 15h5M25 12l4 3-4 3z" stroke="#333" stroke-width="1.500" fill="#333"/></svg><svg class="plugsvg" width="39" height="48"><use href="#pOut"/></svg></div><div class="ev-tail"></div></div><span class="ev-in"></span><span class="ev-out"></span></div>

    <div class="ev-block"><div class="ev-head hd-blue"><span class="ev-dots"></span><input class="ev-port" aria-label="Anschluss Motor" value="A"></div>
     <div class="ev-body"><div class="ev-main"><svg class="ev-pic" viewBox="0 0 44 44"><circle cx="17" cy="18" r="15" fill="#ddd" stroke="#555" stroke-width="3" stroke-dasharray="2 1.500"/><circle cx="17" cy="18" r="13" fill="#ddd" stroke="#444" stroke-width="2"/><path d="M13 7h8v7h7v8h-7v7h-8v-7H6v-8h7z" fill="#d92015"/><g fill="#300"><circle cx="17" cy="10" r="2.600"/><circle cx="17" cy="26" r="2.600"/><circle cx="9" cy="18" r="2.600"/><circle cx="25" cy="18" r="2.600"/></g><path d="M14 18h6M17 15v6" stroke="#300" stroke-width="2"/><circle cx="35" cy="34" r="7" fill="#e6e6e6" stroke="#444" stroke-width="2"/><path d="M30 34h10M35 29v10" stroke="#c8140c" stroke-width="3.500"/><path d="M33 34h4M35 32v4" stroke="#300"/></svg>
      <button class="mode" aria-label="Ein"><svg width="30" height="26" viewBox="0 0 30 26"><path d="M8 6.500A10.500 10.500 0 1 1 5.500 14" fill="none" stroke="#333" stroke-width="2.500"/><path d="M1 12 7 3l5 9z" fill="#333"/></svg></button></div>
      <div class="ev-slot"><svg class="ic" viewBox="0 0 32 32"><path d="M8 27A13 13 0 1 1 25 27z" fill="#fff" stroke="#333" stroke-width="1.500"/><path d="M17 16V5q7 1 10 8z" fill="#333"/><path d="M5 16h3M9 8l2 2M27 16h-9" stroke="#333"/><circle cx="16.500" cy="17" r="3" fill="#e2001a"/><path d="M17 16.500h9" stroke="#e2001a" stroke-width="2"/></svg><svg class="plugsvg" width="39" height="48"><use href="#pIn"/></svg></div><div class="ev-tail"></div></div><span class="ev-in"></span><span class="ev-out"></span></div>

    <div class="ev-block lp-end"><div class="ev-head hd-org"><span class="ev-dots"></span></div>
     <div class="ev-body"><div class="ev-main"><svg class="ev-pic" viewBox="0 0 44 44"><rect x="2" y="2" width="39" height="39" rx="3" fill="#fdfdfd" stroke="#ddd" stroke-width="1.500"/><path d="M5 10 14 4v4H27q9 1 9 10H31q-1-5-6-5H14v4z" fill="#e8201e"/><path d="M5 18h5q1 5 7 5V19l6 6-7 6-1-3Q6 28 5 18z" fill="#e8201e"/></svg>
      <button class="mode" aria-label="Unbegrenzt"><svg width="28" height="18" viewBox="0 0 28 18"><path d="M14 9C10 3 8 2 6 2 0 3 0 15 6 16c4 0 6-4 8-7s4-7 8-7c6 1 6 13 0 14-3 0-5-2-8-7z" fill="none" stroke="#333" stroke-width="2.500"/></svg></button></div><div class="ev-tail"></div></div><span class="ev-in"></span><span class="ev-out stub"></span></div>
   </div>
  </div>
 </section>

 <div class="dock d-flex">
  <section class="palette flex-grow-1">
   <svg class="pal-tabs" width="396" height="38" viewBox="534 859 396 38"><path d="M534 869H542V878H534z" fill="#f9f9f9"/><path d="M603 869H930V878H917V889q0 6-6 6H609q-6 0-6-6z" fill="#f9f9f9"/><path d="M541 881V867q0-6 6-6H598q6 0 6 6V884z" fill="#f2f2f2"/><path d="M534 878h2q5 0 5-5V867q0-6 6-6H598q6 0 6 6V889q0 6 6 6H911q6 0 6-6V883q0-5 5-5h8" fill="none" stroke="#b0b0b0" stroke-width="2"/></svg>
   <div class="pal-btns"><button class="pc-g" aria-label="Aktion"></button><button class="hd-org" aria-label="Ablaufsteuerung"></button><button class="hd-yel" aria-label="Sensor"></button><button class="hd-red" aria-label="Daten"></button><button class="hd-blue" aria-label="Erweitert"></button><button class="hd-teal" aria-label="Eigene Blöcke"></button></div>
   <div class="pal-items">
    <button class="pal-blk" aria-label="Mittlerer Motor"><svg class="pic" width="76" height="82" overflow="visible"><use href="#palbase"/><path d="M12 19H27L42 28 30 31 12 25z" fill="#f2f2f2" stroke="#bbb" stroke-width=".8"/><path d="M12 23 30 30V45L22 48 12 41z" fill="url(#gDark)"/><path d="M16 23 24 22 38 28 30 30z" fill="#666"/><path d="M28 30 43 29V43L34 49 22 48z" fill="url(#gMetal)" stroke="#999" stroke-width=".6"/><circle cx="34" cy="40" r="2.500" fill="#d22"/><path d="M36 36l-4 8M31 39l7 2" stroke="#d22" stroke-width="1.500"/><circle cx="21" cy="44" r="1.800" fill="#444"/><circle cx="34" cy="33" r="1" fill="#444"/><circle cx="40" cy="38" r="1" fill="#444"/></svg></button>
    <button class="pal-blk" aria-label="Großer Motor"><svg class="pic" width="76" height="82" overflow="visible"><use href="#palbase"/><use href="#motorL" x="10" y="16" width="34" height="34"/></svg></button>
    <button class="pal-blk" aria-label="Standardsteuerung"><svg class="pic" width="76" height="82" overflow="visible"><use href="#palbase"/><use href="#motor2" x="10" y="17" width="34" height="34"/><g fill="none" stroke="#555" stroke-width="1.800"><circle cx="36" cy="26" r="7"/><path d="M29 25q7-3 14 0M36 26v7"/></g><circle cx="36" cy="26" r="2" fill="#555"/></svg></button>
    <button class="pal-blk" aria-label="Hebellenkung"><svg class="pic" width="76" height="82" overflow="visible"><use href="#palbase"/><use href="#motor2" x="10" y="17" width="34" height="34"/><rect x="30" y="18" width="13" height="15" rx="6" fill="#fff" stroke="#aaa"/><path d="M34 20v12M39 20v12M32 27h4M37 23h4" stroke="#333" stroke-width="1.500"/></svg></button>
    <button class="pal-blk" aria-label="Anzeige"><svg class="pic" width="76" height="82" overflow="visible"><use href="#palbase"/><path d="M15 18H42V46H15z" fill="#bfc4c8"/><path d="M18.500 21.500H38.500V40H18.500z" fill="#f4f4f4" stroke="#8d9296"/><path d="M25 24h7l3 4v5l-3 4h-7l-3-4v-5z" fill="#1a1a1a"/><path d="M20 30.500h18" stroke="#f4f4f4"/><rect x="25" y="27" width="7" height="7" rx="1" fill="#fff"/><rect x="26" y="28" width="5" height="5" fill="#e8402a"/><path d="M28.500 41V49" stroke="#666" stroke-width="2.500"/><path d="M13 49H43" stroke="#ccc" stroke-width="2"/></svg></button>
    <button class="pal-blk" aria-label="Klang"><svg class="pic" width="76" height="82" overflow="visible"><use href="#palbase"/><ellipse cx="23" cy="28" rx="7.500" ry="7.500" fill="#ccc" stroke="#444" stroke-width="2.500"/><ellipse cx="31" cy="35" rx="10" ry="14" fill="#f1f1f1" stroke="#555" stroke-width="2.500" transform="rotate(20 31 35)"/><path d="M24 27Q36 20 40 27L30 34z" fill="#999" opacity=".6"/><ellipse cx="28" cy="32" rx="4.500" ry="5.500" fill="url(#gDark)"/></svg></button>
    <button class="pal-blk" aria-label="Stein-Statusleuchte"><svg class="pic" width="76" height="82" overflow="visible"><use href="#palbase"/><path d="M15 19h9l5 6 6 5v10l-6 4-5 5h-9l-2-4V23z" fill="#3a2018" stroke="#b5452c"/><path d="M15 20h8l4 6v14l-4 6h-7l-4-5V24z" fill="#e2e2e2" stroke="#999" stroke-width=".8"/><rect x="13" y="27" width="12" height="11" rx="2" fill="#2a2a2a"/><path d="M13 44l3 2h7l3-3-3 6h-8z" fill="#111"/><path d="M17 24l2.500-2.500L22 24M17 41l2.500 2.500L22 41" fill="none" stroke="#999"/><circle cx="37" cy="33" r="5.500" fill="#f4485a"/><rect x="28" y="28" width="11" height="10" rx="3" fill="#c9c9c9" stroke="#777"/></svg></button>
   </div>
  </section>
  <div class="split"><i></i><button aria-label="Hardware-Seite einklappen"><svg width="11" height="20" viewBox="0 0 11 20"><path d="M3 5v10l8-5z" fill="#333"/></svg></button></div>
  <section class="brick d-flex">
   <div class="brick-tabs d-flex flex-column">
    <button aria-label="Verfügbare Steine"><svg width="24" height="24"><rect width="24" height="24" fill="#0a8fff"/><path d="M2 4.500h13M2 12h13M2 19.500h13" stroke="#fff" stroke-width="4.500"/><g fill="#fff"><circle cx="20" cy="4.500" r="2.200"/><circle cx="20" cy="12" r="2.200"/><circle cx="20" cy="19.500" r="2.200"/></g></svg></button>
    <button aria-label="Anschlussansicht"><svg width="24" height="22"><rect width="24" height="22" fill="#fff"/><path d="M3 5v7h3v4h2v3h8v-3h2v-4h3V5h-2v5h-2V5h-2v5h-2V5h-2v5H9V5H7v5H5V5z" fill="#808080"/></svg></button>
    <button aria-label="Stein-Informationen"><svg width="25" height="23"><path d="M0 0h19v23H0z" fill="#fff"/><path d="M3 3h12v14H3zM6 20h8v3H6z" fill="#808080"/><circle cx="16" cy="11" r="9" fill="#fff"/><circle cx="16" cy="6" r="1.800" fill="#555"/><path d="M13 9.500h4V16M13 16.500h6.500" fill="none" stroke="#555" stroke-width="2"/></svg></button>
   </div>
   <table class="brick-list">
    <colgroup><col><col style="width:43px"><col style="width:42px"><col style="width:43px"><col style="width:17px"></colgroup>
    <thead><tr><th class="text-end pe-1"><button class="mini me-1" aria-label="Aktualisieren"><svg width="18" height="18" fill="none" stroke="#fff" stroke-width="2.200"><path d="M3 8a6.500 6.500 0 0 1 11-3M15 10a6.500 6.500 0 0 1-11 3"/><path d="M11 6h5V1zM7 12H2v5z" fill="#fff" stroke="none"/></svg></button><button class="mini off" aria-label="Verbinden"><svg width="20" height="14"><path d="M0 6h3V3h2v-1h3v10H5v-1H3V8H0zM12 2h2q3 1 3 4h3v2h-3q0 3-3 4h-2z" fill="#fff"/><path d="M8 4.500h3M8 9.500h3" stroke="#fff" stroke-width="1.500"/></svg></button></th><th>USB</th>
     <th><svg width="14" height="22" fill="none" stroke="#555" stroke-width="2"><path d="M2 6l10 9-5 5V2l5 5L2 16"/></svg></th><th><svg width="22" height="20" fill="none" stroke="#555" stroke-width="2"><path d="M1 7q10-9 20 0M4 10.500q7-6 14 0M7 14q4-3 8 0"/><circle cx="11" cy="17" r="1.500" fill="#555"/></svg></th><th></th></tr></thead>
    <tbody><tr><td>Mit keinem Stein<br>verbunden</td><td></td><td></td><td></td><td></td></tr></tbody>
   </table>
  </section>
  <section class="runbox d-flex flex-column align-items-center">
   <svg width="36" height="17" viewBox="0 0 36 17" role="img" aria-label="EV3"><rect x="1" y="1" width="34" height="15" rx="3" fill="#aaa" stroke="#e8eeee" stroke-width="2"/><path d="M12 4H5V13H12M5 8.500H11M14 4l4 9 4-9M24 4H31V13H24M26 8.500h5" fill="none" stroke="#f4f8f8" stroke-width="2"/></svg>
   <button aria-label="Herunterladen"><svg width="18" height="22"><path d="M6 1h7v3H6zM6 6h7v4H6zM1 13h17l-8.500 8z" fill="#999"/></svg></button>
   <button class="rounded-circle" aria-label="Ausführen"><svg width="12" height="14"><path d="M2 0v14l10-7z" fill="#888"/></svg></button>
   <button aria-label="Auswahl ausführen"><svg width="20" height="16"><path d="M6 2v12l9-6z" fill="#888"/><path d="M4 1q-5 7 0 14M16 1q5 7 0 14" fill="none" stroke="#999" stroke-width="1.500"/></svg></button>
  </section>
 </div>
</main>
<footer class="taskbar d-flex">
 <button class="task start" aria-label="Start"><svg width="20" height="20"><path d="M0 3l8-1v8H0zM9 1.800 20 0v10H9zM0 11h8v8l-8-1zM9 11h11v9L9 18.500z" fill="#fff"/></svg></button>
 <button class="task me-1" aria-label="Taskansicht"><svg width="22" height="20" fill="none" stroke="#fff" stroke-width="1.300"><path d="M1 0v3h12V0M1 20v-3h12v3M1.500 5.500h11v9h-11zM19 0v4M19 12v8"/><path d="M17.500 5.500h3v4h-3z" fill="#fff" stroke="none"/></svg></button>
 <svg class="task-sep" width="4" height="50"><path d="M.5 12v26M3.500 12v26" stroke="#555"/></svg>
 <button class="task" aria-label="Benutzerordner"><svg width="26" height="30"><path d="M2 2h14v23H2z" fill="#f5d272"/><path d="M2 2l7 4v23l-7-4z" fill="#ffe9a6"/><path d="M12 17h7v6h-7z" fill="#e0b08c"/><path d="M11 14q0-5 5-5t5 5v5h-3l-2-3-4 3z" fill="#4a3a30"/><path d="M10 29q0-8 7-8t8 8z" fill="#3d9068"/></svg></button>
 <button class="task run" aria-label="Firefox"><svg width="30" height="32"><path d="M15 2c3 1 3 4 4 5 2-1 0-4 0-4 5 3 9 8 9 15a13 12 0 0 1-26 0C2 13 2 10 4 7l3 3c2-2 7-4 8-8z" fill="#ff7a1a"/><path d="M20 2c6 4 8 10 8 15-1 7-6 11-11 12 5-6 8-14 3-27z" fill="#ffd33a"/><circle cx="15" cy="17" r="6.500" fill="#6a3fd0"/><path d="M2 18c1 9 7 12 13 12 6 0 10-3 12-7-6 5-19 8-25-5z" fill="#f0246c"/></svg></button>
 <button class="task" aria-label="CCleaner"><svg width="32" height="30"><path d="M29 5v6h-6q-7-2-8 5t8 6h6l-2 6q-19 3-19-11T22 1q5 0 7 4z" fill="#d33a28"/><path d="M18 5l3 1-6 12-3-2z" fill="#2f86d8"/><path d="M10 14l7 4q0 8-6 10Q3 28 1 23q6-2 9-9z" fill="#f1dcc0"/><path d="M11 13l7 4-1 2-8-4z" fill="#2f86d8"/></svg></button>
 <button class="task run" aria-label="Explorer"><svg width="28" height="26"><path d="M0 1h12l3 3h13v21H0z" fill="#f2b72c"/><path d="M0 6h28v19H0z" fill="#ffd766"/><path d="M5 25V14h18v11h-4v-6H9v6z" fill="#3d97dd"/></svg></button>
 <button class="task" aria-label="LibreOffice"><svg width="26" height="30"><path d="M2 1h16l6 7v21H2z" fill="#efefef" stroke="#555"/><path d="M16 1h8v10z" fill="#666"/></svg></button>
 <button class="task" aria-label="Thunderbird"><svg width="30" height="30"><circle cx="15" cy="15" r="14" fill="#2a6cc4"/><path d="M8 3q12-4 19 6 3 9-5 17 5-15-14-23z" fill="#5aa5ee"/><path d="M8 12l14-3 2 11q-6 6-14 3z" fill="#f3f3f3"/><path d="M8 12l9 6 5-9" fill="none" stroke="#aaa"/><path d="M1 15q1 10 10 14-4-7-2-13z" fill="#c9d9ec"/></svg></button>
 <button class="task" aria-label="Kodi"><svg width="28" height="28"><path d="M14 0 28 14 14 28 0 14z" fill="#e8f6fd"/><path d="M14 1.500 26.500 14 14 26.500 1.500 14z" fill="#1d9ad1"/><path d="M10 8v12M18 8l-6 6 7 7" stroke="#fff" stroke-width="3" fill="none"/></svg></button>
 <button class="task" aria-label="Opera"><svg width="30" height="30"><ellipse cx="15" cy="15" rx="14" ry="14.500" fill="#e8101e"/><path d="M20 2q10 3 9.500 13T20 28q5-13 0-26z" fill="#ff4a50"/><ellipse cx="15" cy="15" rx="6.500" ry="10.500" fill="#281c1c"/></svg></button>
 <button class="task run" aria-label="Git"><svg width="32" height="32"><path d="M16 1l7 7-7 7-7-7z" fill="#f0716c"/><path d="M24 9l7 7-7 7-7-7z" fill="#7ec85a"/><path d="M8 9l7 7-7 7-7-7z" fill="#6ea3ec"/><path d="M16 17l7 7-7 7-7-7z" fill="#f7dc6a"/><path d="M12 8l4 4v13M16 13l7 4" stroke="#222" stroke-width="2" fill="none"/><g fill="#222"><circle cx="16" cy="11" r="2.300"/><circle cx="16" cy="24" r="2.300"/><circle cx="23" cy="17" r="2.300"/></g></svg></button>
 <button class="task run" aria-label="Programm"></button>
 <button class="task run act" aria-label="EV3"><svg width="30" height="30"><rect width="30" height="30" rx="4" fill="#f6f6f6"/><path d="M9 4h12l6 8v2H3v-2zM3 16h24v2l-6 8H9l-6-8z" fill="#0a0a0a"/><rect x="9" y="9" width="12" height="12" rx="2" fill="#fff" stroke="#0a0a0a" stroke-width="2"/><rect x="12" y="12" width="6" height="6" fill="#e8381c"/></svg></button>
 <div class="tray ms-auto d-flex align-items-center">
  <svg class="me-2" width="84" height="26" role="img" aria-label="Akku 100%"><path d="M0 0h62v26H0zM62 7h2.500v12H62z" fill="#fff"/><path d="M3 3h56v20H3z" fill="#159a47"/><text x="31" y="19" text-anchor="middle" font-size="17" fill="#fff">100%</text><path d="M73 4h2.500v5h3V4H81v5h2v7l-4 4v4h-3v-4l-4-4V9h1z" fill="#fff"/></svg>
  <button class="tray-more" aria-label="Ausgeblendete Symbole"><svg width="16" height="10"><path d="M1 9l7-7.500L15 9" fill="none" stroke="#fff" stroke-width="1.500"/></svg></button>
  <button class="px-4" aria-label="WLAN"><svg width="16" height="16" fill="none" stroke="#ccc" stroke-width="1.200"><path d="M1 15A14 14 0 0 1 15 1M5 15A10 10 0 0 1 15 5M9 15a6 6 0 0 1 6-6"/><circle cx="13.500" cy="13.500" r="1.500" fill="#fff"/></svg></button>
  <button class="pe-2" aria-label="Akku"><svg width="22" height="16"><path d="M4.500 4.500h15v9h-15zM20 7h1.500v4H20z" fill="none" stroke="#fff"/><path d="M6.500 6.500h11v5h-11z" fill="#fff"/><path d="M1 1v3M4 1v3M0 4h5v3H0zM2.500 7v4" stroke="#fff" fill="#fff"/></svg></button>
  <button class="px-2" aria-label="Lautstärke"><svg width="20" height="18" fill="none" stroke="#fff"><path d="M1 6h3l4-4v14l-4-4H1zM10.500 6.500q2 2.500 0 5"/><path d="M13.500 4q4 5 0 10M16.500 2q5 7 0 14" stroke="#888"/></svg></button>
  <button class="px-3" aria-label="Windows Ink"><svg width="22" height="22" fill="none" stroke="#fff" stroke-width="1.300"><path d="M7 15 16 2q3-2 3 1L10 16l-4 3zM9 10q-8 1-8 6 0 5 6 3M13 10q8-1 7 3-2 2-5 2"/></svg></button>
  <button class="px-2" aria-label="Bildschirmtastatur"><svg width="30" height="18" fill="none" stroke="#fff"><path d="M.5.500h29v17H.5z"/><path d="M4 5h22M4 9h22" stroke-width="1.500" stroke-dasharray="2 1.500"/><path d="M4 13.500h3M9 13.500h12M23 13.500h3" stroke-width="1.500"/></svg></button>
  <button class="px-3" aria-label="Touchpad"><svg width="20" height="17" fill="none" stroke="#fff"><path d="M.5.500h19v16H.5zM.5 11.500h19M10 11.500v5"/></svg></button>
  <button class="px-2" aria-label="Sprache"><span>DEU<br>DE</span></button>
  <button class="px-2" aria-label="Uhrzeit"><span>06:15<br>09.06.2021</span></button>
  <button class="px-3" aria-label="Benachrichtigungen"><svg width="20" height="20" fill="none" stroke="#fff" stroke-width="1.300"><path d="M1 1h18v14h-6.500L10 18.500 7.500 15H1z"/></svg></button>
  <svg width="14" height="50"><path d="M8.500 0v50" stroke="#666"/></svg>
 </div>
</footer>
</div>
<script src="https://cdn.jsdelivr.net/npm/bootstrap@5.3.0/dist/js/bootstrap.bundle.min.js"></script>
</body>
</html>
